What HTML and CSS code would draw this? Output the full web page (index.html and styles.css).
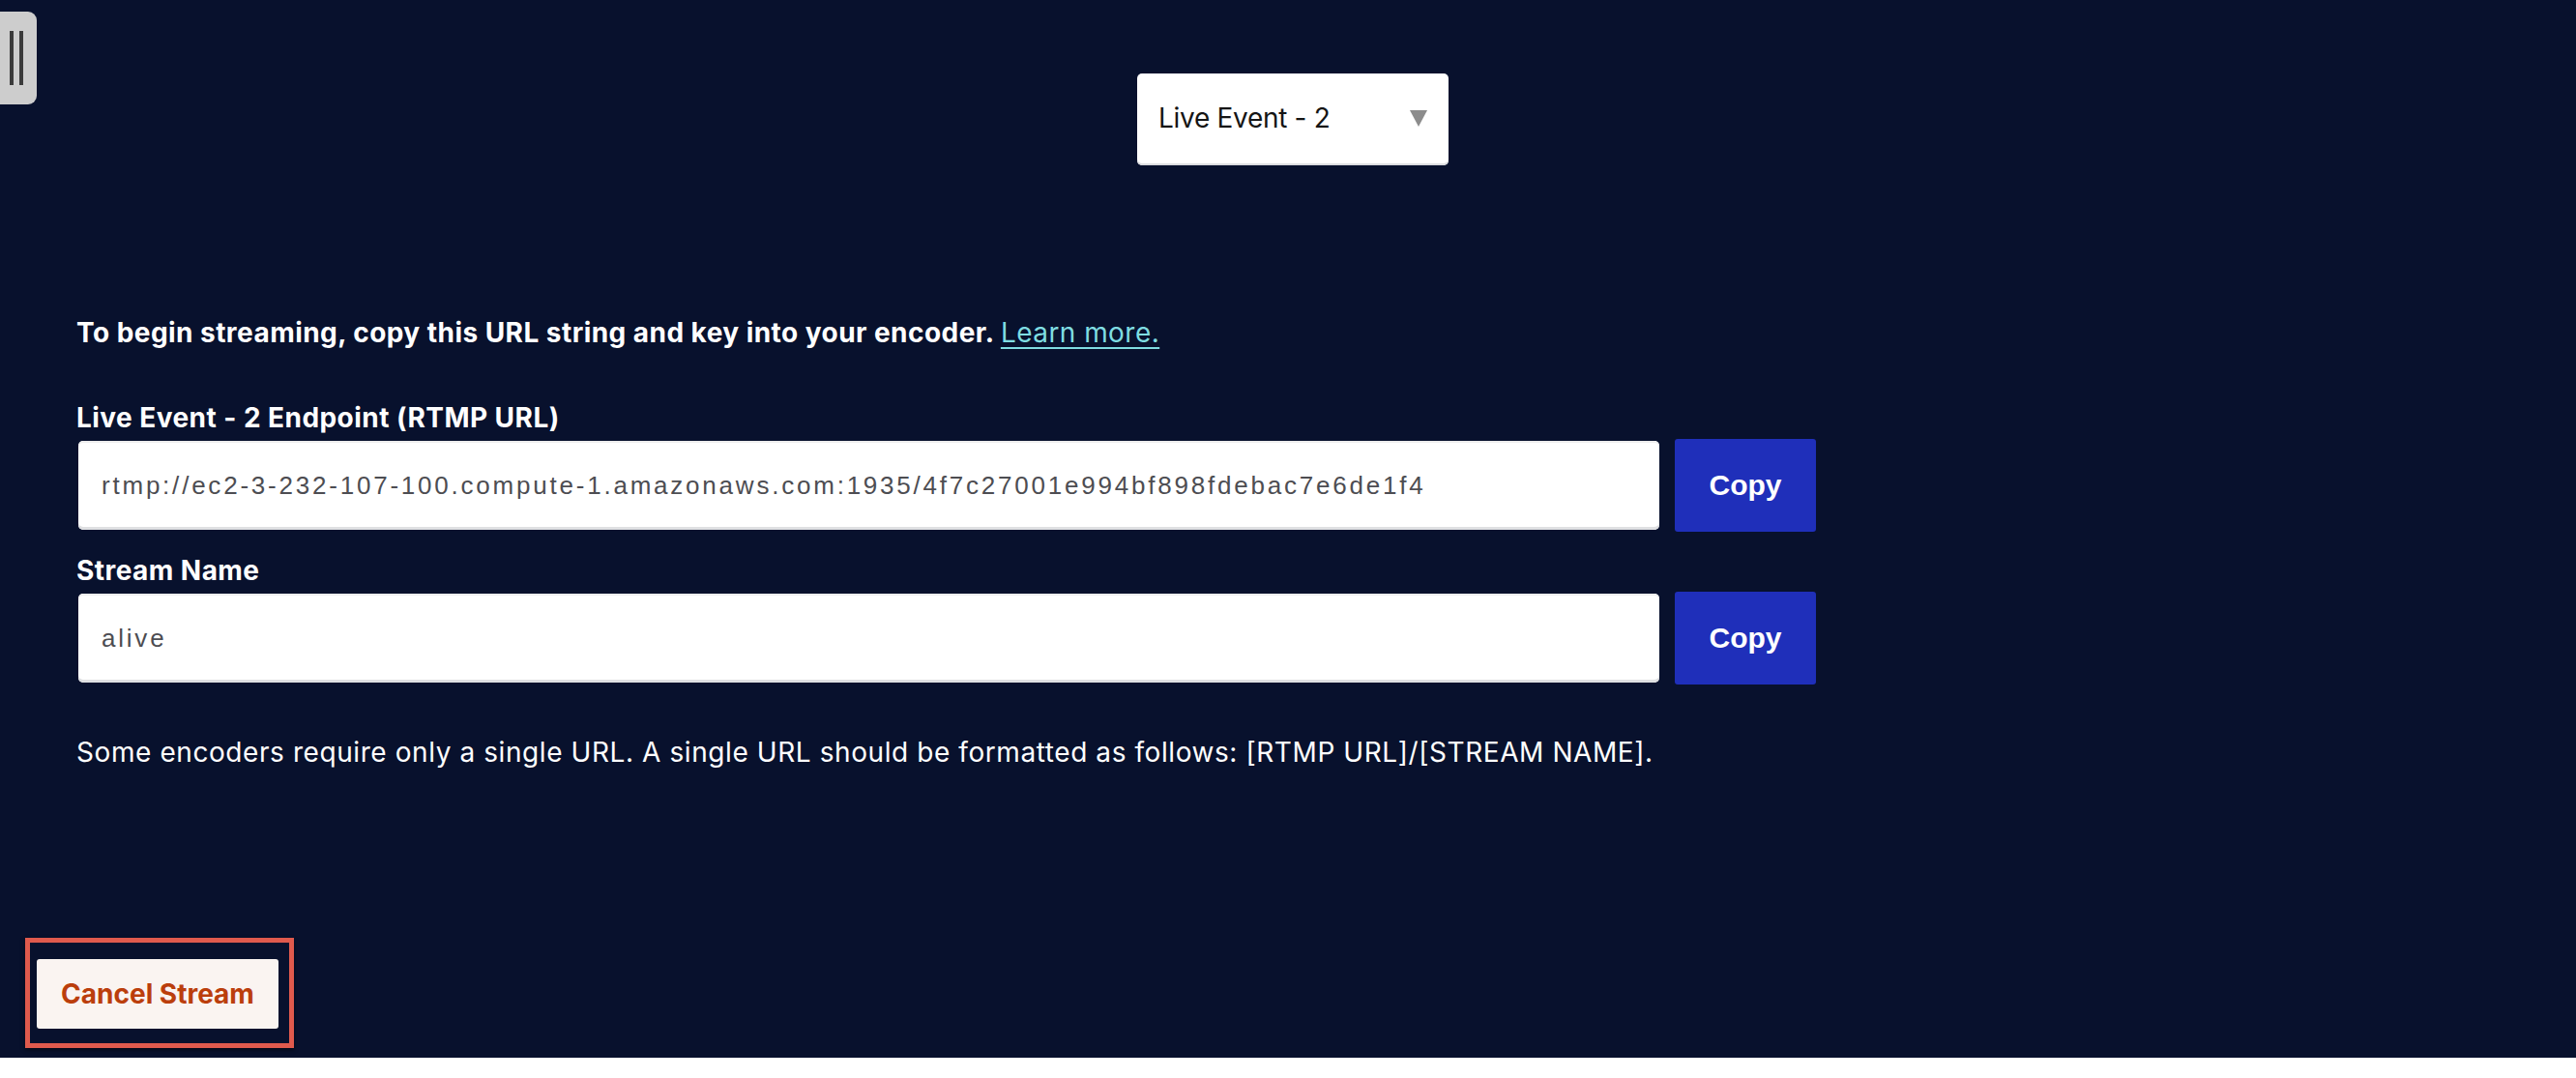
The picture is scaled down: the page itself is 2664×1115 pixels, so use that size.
FILE: index.html
```html
<!DOCTYPE html>
<html lang="en">
<head>
<meta charset="utf-8">
<title>Live Event - 2</title>
<link rel="stylesheet" href="styles.css">
</head>
<body>
<div class="page">
  <div class="handle"><span class="bar"></span><span class="bar"></span></div>

  <div class="top">
    <div class="select">
      <span class="select-text">Live Event - 2</span>
      <span class="caret"></span>
    </div>
  </div>

  <div class="content">
    <p class="intro">To begin streaming, copy this URL string and key into your encoder. <a class="learn" href="#">Learn more.</a></p>

    <div class="field">
      <div class="label">Live Event - 2 Endpoint (RTMP URL)</div>
      <div class="row">
        <div class="input">rtmp://ec2-3-232-107-100.compute-1.amazonaws.com:1935/4f7c27001e994bf898fdebac7e6de1f4</div>
        <button class="copy">Copy</button>
      </div>
    </div>

    <div class="field">
      <div class="label">Stream Name</div>
      <div class="row">
        <div class="input">alive</div>
        <button class="copy">Copy</button>
      </div>
    </div>

    <p class="note">Some encoders require only a single URL. A single URL should be formatted as follows: [RTMP URL]/[STREAM NAME].</p>
  </div>

  <div class="footer">
    <div class="highlight">
      <button class="cancel">Cancel Stream</button>
    </div>
  </div>
</div>
</body>
</html>
```

FILE: styles.css
```css
html, body {
  margin: 0;
  padding: 0;
  background: #ffffff;
}

body {
  font-family: Inter, "Noto Sans", sans-serif;
  font-size: 28px;
  line-height: 35px;
  letter-spacing: 0.45px;
  color: #ffffff;
}

.page {
  position: relative;
  height: 1094px;
  background: #08112d;
  display: flex;
  flex-direction: column;
}

.handle {
  position: absolute;
  left: 0;
  top: 12px;
  width: 38px;
  height: 96px;
  background: #cdcdcd;
  border-radius: 0 9px 9px 0;
  display: flex;
  gap: 6px;
  padding-left: 10px;
  box-sizing: border-box;
  align-items: center;
}

.handle .bar {
  width: 4px;
  height: 56px;
  background: #3b3b3b;
}

.top {
  display: flex;
  justify-content: center;
  padding-top: 76px;
  padding-left: 10px;
}

.select {
  width: 322px;
  height: 95px;
  box-sizing: border-box;
  background: #ffffff;
  border-radius: 5px;
  box-shadow: inset 0 -2px 0 #dcdde0;
  display: flex;
  align-items: center;
  justify-content: space-between;
  padding: 0 22px 0 22px;
  color: #151515;
  font-size: 28px;
  letter-spacing: -0.3px;
}

.select-text {
  position: relative;
  top: -1px;
}

.caret {
  width: 0;
  height: 0;
  border-left: 9px solid transparent;
  border-right: 9px solid transparent;
  border-top: 17px solid #8c8c8c;
  margin-top: -2px;
}

.content {
  padding-left: 79px;
  padding-top: 156px;
  display: flex;
  flex-direction: column;
}

.intro {
  margin: 0 0 53px 0;
  font-weight: 700;
}

.learn {
  color: #7fdde2;
  font-weight: 400;
  text-decoration: underline;
  text-underline-offset: 5px;
  text-decoration-thickness: 2px;
}

.field {
  display: flex;
  flex-direction: column;
  gap: 4px;
  margin-bottom: 23px;
}

.label {
  font-weight: 700;
}

.row {
  display: flex;
  align-items: center;
  gap: 16px;
}

.input {
  width: 1635px;
  height: 92px;
  box-sizing: border-box;
  margin-left: 2px;
  background: #ffffff;
  border-radius: 5px;
  box-shadow: inset 0 -3px 0 #dfe0e2, inset 0 2px 0 #eeeeee;
  display: flex;
  align-items: center;
  padding-left: 24px;
  font-family: "Liberation Sans", Arial, sans-serif;
  font-size: 26px;
  letter-spacing: 2.78px;
  color: #4d4d52;
}

.copy {
  width: 146px;
  height: 96px;
  border: none;
  border-radius: 3px;
  background: #1f2fba;
  color: #ffffff;
  font-family: "Liberation Sans", Arial, sans-serif;
  font-weight: 700;
  font-size: 30px;
  letter-spacing: 0;
  padding: 0;
  cursor: pointer;
}

.note {
  margin: 30px 0 0 0;
  font-weight: 400;
  letter-spacing: 0.58px;
}

.footer {
  margin-top: auto;
  padding-left: 26px;
  padding-bottom: 10px;
}

.highlight {
  width: 278px;
  height: 114px;
  box-sizing: border-box;
  border: 5px solid #e05a4d;
  box-shadow: 0 2px 4px rgba(0, 0, 0, 0.5);
  padding: 17px 0 0 7px;
}

.cancel {
  width: 250px;
  height: 72px;
  border: none;
  border-radius: 3px;
  background: #faf4f1;
  color: #bb3e0c;
  font-family: Inter, "Noto Sans", sans-serif;
  font-weight: 700;
  font-size: 28px;
  letter-spacing: 0;
  padding: 0;
  cursor: pointer;
}
```
